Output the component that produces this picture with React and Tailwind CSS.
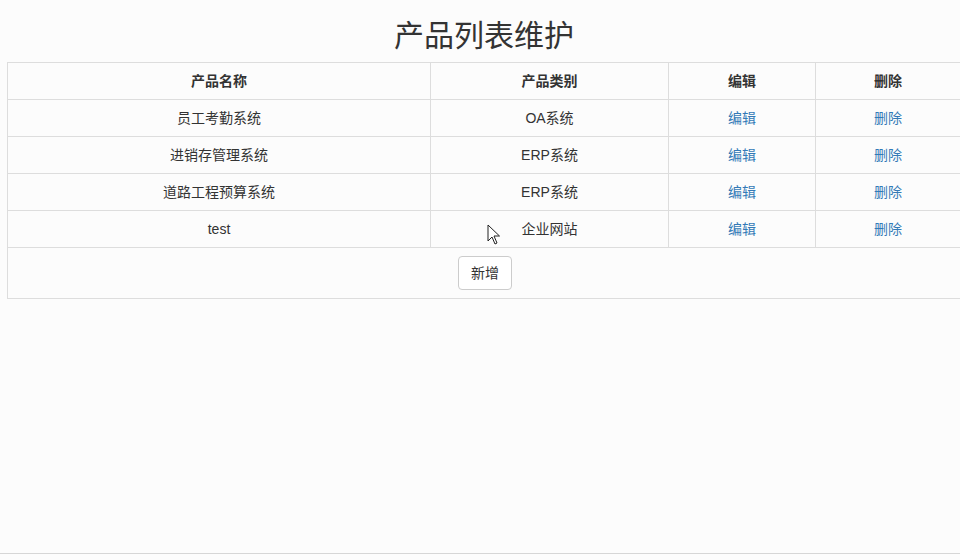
import React from 'react';

const products = [
  { name: '员工考勤系统', type: 'OA系统' },
  { name: '进销存管理系统', type: 'ERP系统' },
  { name: '道路工程预算系统', type: 'ERP系统' },
  { name: 'test', type: '企业网站' },
];

function Cursor() {
  return (
    <svg className="absolute left-[487px] top-[224px] pointer-events-none" width="14" height="22" viewBox="0 0 14 22">
      <path d="M1 1 L1 17 L5 13 L8 20 L10 19 L7 12 L12.5 12 Z" fill="#fff" stroke="#222" strokeWidth="1" strokeLinejoin="round" />
    </svg>
  );
}

export default function App() {
  return (
    <div
      className="relative h-[560px] bg-[#fcfcfc] text-[14px] text-[#333] overflow-hidden"
      style={{ fontFamily: '"Liberation Sans", "Noto Sans CJK SC", sans-serif' }}
    >
      <div className="pl-[7px] w-[961px]">
        <h2 className="mt-[19px] mb-[10px] text-center text-[30px] leading-[33px] font-normal">产品列表维护</h2>
        <table className="w-full border-collapse border border-[#ddd] text-center leading-5">
          <thead>
            <tr>
              <th className="w-[423px] border border-[#ddd] p-2 font-bold">产品名称</th>
              <th className="w-[238px] border border-[#ddd] p-2 font-bold">产品类别</th>
              <th className="w-[147px] border border-[#ddd] p-2 font-bold">编辑</th>
              <th className="border border-[#ddd] p-2 font-bold">删除</th>
            </tr>
          </thead>
          <tbody>
            {products.map((p) => (
              <tr key={p.name}>
                <td className="border border-[#ddd] p-2">{p.name}</td>
                <td className="border border-[#ddd] p-2">{p.type}</td>
                <td className="border border-[#ddd] p-2">
                  <a className="text-[#337ab7] cursor-pointer">编辑</a>
                </td>
                <td className="border border-[#ddd] p-2">
                  <a className="text-[#337ab7] cursor-pointer">删除</a>
                </td>
              </tr>
            ))}
            <tr>
              <td colSpan={4} className="border border-[#ddd] p-2">
                <button className="h-[34px] ml-[2px] px-3 border border-[#ccc] rounded bg-white text-[#333] leading-5">新增</button>
              </td>
            </tr>
          </tbody>
        </table>
      </div>
      <div className="absolute left-0 right-0 top-[553px] border-t border-[#d6d6d6]" />
      <Cursor />
    </div>
  );
}
